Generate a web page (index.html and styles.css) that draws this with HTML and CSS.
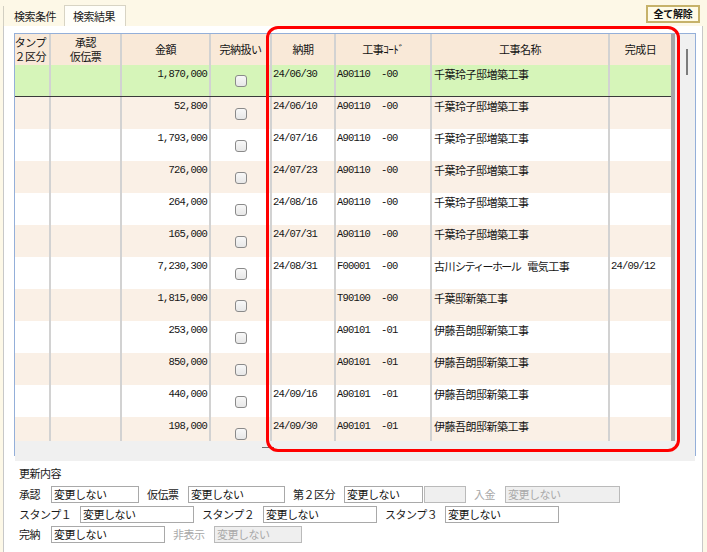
FILE: index.html
```html
<!DOCTYPE html>
<html lang="ja">
<head>
<meta charset="utf-8">
<title>検索結果</title>
<link rel="stylesheet" href="styles.css">
</head>
<body>
<div class="app">
  <div class="topbar">
    <div class="tabs">
      <div class="tab">検索条件</div>
      <div class="tab active">検索結果</div>
    </div>
    <button class="clear-btn">全て解除</button>
  </div>
  <div class="panel">
    <div class="gridbox">
      <div class="gmain">
        <div class="table">
          <div class="row head">
            <div class="c hc clip"><span>スタンプ</span><span>第２区分</span></div>
            <div class="c hc"><span>承認</span><span>仮伝票</span></div>
            <div class="c hc">金額</div>
            <div class="c hc">完納扱い</div>
            <div class="c hc">納期</div>
            <div class="c hc">工事ｺｰﾄﾞ</div>
            <div class="c hc">工事名称</div>
            <div class="c hc">完成日</div>
          </div>
          <div class="row sel">
            <div class="c"></div><div class="c"></div>
            <div class="c num">1,870,000</div>
            <div class="c chk"><span class="box"></span></div>
            <div class="c mono">24/06/30</div>
            <div class="c mono">A90110  -00</div>
            <div class="c">千葉玲子邸増築工事</div>
            <div class="c mono"></div>
          </div>
          <div class="row alt">
            <div class="c"></div><div class="c"></div>
            <div class="c num">52,800</div>
            <div class="c chk"><span class="box"></span></div>
            <div class="c mono">24/06/10</div>
            <div class="c mono">A90110  -00</div>
            <div class="c">千葉玲子邸増築工事</div>
            <div class="c mono"></div>
          </div>
          <div class="row">
            <div class="c"></div><div class="c"></div>
            <div class="c num">1,793,000</div>
            <div class="c chk"><span class="box"></span></div>
            <div class="c mono">24/07/16</div>
            <div class="c mono">A90110  -00</div>
            <div class="c">千葉玲子邸増築工事</div>
            <div class="c mono"></div>
          </div>
          <div class="row alt">
            <div class="c"></div><div class="c"></div>
            <div class="c num">726,000</div>
            <div class="c chk"><span class="box"></span></div>
            <div class="c mono">24/07/23</div>
            <div class="c mono">A90110  -00</div>
            <div class="c">千葉玲子邸増築工事</div>
            <div class="c mono"></div>
          </div>
          <div class="row">
            <div class="c"></div><div class="c"></div>
            <div class="c num">264,000</div>
            <div class="c chk"><span class="box"></span></div>
            <div class="c mono">24/08/16</div>
            <div class="c mono">A90110  -00</div>
            <div class="c">千葉玲子邸増築工事</div>
            <div class="c mono"></div>
          </div>
          <div class="row alt">
            <div class="c"></div><div class="c"></div>
            <div class="c num">165,000</div>
            <div class="c chk"><span class="box"></span></div>
            <div class="c mono">24/07/31</div>
            <div class="c mono">A90110  -00</div>
            <div class="c">千葉玲子邸増築工事</div>
            <div class="c mono"></div>
          </div>
          <div class="row">
            <div class="c"></div><div class="c"></div>
            <div class="c num">7,230,300</div>
            <div class="c chk"><span class="box"></span></div>
            <div class="c mono">24/08/31</div>
            <div class="c mono">F00001  -00</div>
            <div class="c">古川<span class="kana">シティーホール</span><span class="gap">　</span>電気工事</div>
            <div class="c mono">24/09/12</div>
          </div>
          <div class="row alt">
            <div class="c"></div><div class="c"></div>
            <div class="c num">1,815,000</div>
            <div class="c chk"><span class="box"></span></div>
            <div class="c mono"></div>
            <div class="c mono">T90100  -00</div>
            <div class="c">千葉邸新築工事</div>
            <div class="c mono"></div>
          </div>
          <div class="row">
            <div class="c"></div><div class="c"></div>
            <div class="c num">253,000</div>
            <div class="c chk"><span class="box"></span></div>
            <div class="c mono"></div>
            <div class="c mono">A90101  -01</div>
            <div class="c">伊藤吾朗邸新築工事</div>
            <div class="c mono"></div>
          </div>
          <div class="row alt">
            <div class="c"></div><div class="c"></div>
            <div class="c num">850,000</div>
            <div class="c chk"><span class="box"></span></div>
            <div class="c mono"></div>
            <div class="c mono">A90101  -01</div>
            <div class="c">伊藤吾朗邸新築工事</div>
            <div class="c mono"></div>
          </div>
          <div class="row">
            <div class="c"></div><div class="c"></div>
            <div class="c num">440,000</div>
            <div class="c chk"><span class="box"></span></div>
            <div class="c mono">24/09/16</div>
            <div class="c mono">A90101  -01</div>
            <div class="c">伊藤吾朗邸新築工事</div>
            <div class="c mono"></div>
          </div>
          <div class="row alt">
            <div class="c"></div><div class="c"></div>
            <div class="c num">198,000</div>
            <div class="c chk"><span class="box"></span></div>
            <div class="c mono">24/09/30</div>
            <div class="c mono">A90101  -01</div>
            <div class="c">伊藤吾朗邸新築工事</div>
            <div class="c mono"></div>
          </div>
        </div>
        <div class="dstrip"></div>
        <div class="vscroll"><div class="vthumb"></div></div>
      </div>
      <div class="hscroll"><div class="hthumb"></div></div>
    </div>

    <div class="form">
      <div class="form-title">更新内容</div>
      <div class="frow first">
        <span class="lbl w32">承認</span>
        <div class="field i87">変更しない</div>
        <span class="lbl w41 ml">仮伝票</span>
        <div class="field i97">変更しない</div>
        <span class="lbl w51 ml">第２区分</span>
        <div class="field i79">変更しない</div>
        <div class="field dis i42 ml1"></div>
        <span class="lbl dis w31 ml">入金</span>
        <div class="field dis i115">変更しない</div>
      </div>
      <div class="frow">
        <span class="lbl w61">スタンプ１</span>
        <div class="field i114">変更しない</div>
        <span class="lbl w61 ml">スタンプ２</span>
        <div class="field i114">変更しない</div>
        <span class="lbl w60 ml">スタンプ３</span>
        <div class="field i114">変更しない</div>
      </div>
      <div class="frow">
        <span class="lbl w32">完納</span>
        <div class="field i114">変更しない</div>
        <span class="lbl dis w41 ml">非表示</span>
        <div class="field dis i88">変更しない</div>
      </div>
    </div>
  </div>
  <div class="annot"></div>
</div>
</body>
</html>
```
FILE: styles.css
```css
* { box-sizing: border-box; }

body {
  margin: 0;
  width: 707px;
  height: 552px;
  overflow: hidden;
  background: #fff;
  font-family: "Noto Sans CJK JP", "Noto Sans", sans-serif;
  font-size: 11px;
  letter-spacing: -0.5px;
  color: #1a1a1a;
}

.app {
  position: relative;
  width: 707px;
  height: 552px;
  background: #fdf8e7;
}

/* top bar with tabs */
.topbar {
  height: 26px;
  display: flex;
  justify-content: space-between;
  align-items: flex-end;
  padding-left: 3px;
}
.tabs { display: flex; align-items: flex-end; }
.tab {
  height: 20px;
  width: 61px;
  line-height: 20px;
  padding-left: 10px;
  border-left: 1px solid #d2cfc2;
}
.tab.active {
  height: 21px;
  width: 62px;
  padding-left: 8px;
  background: #fffef9;
  border: 1px solid #d8d4c4;
  border-bottom: 0;
  line-height: 21px;
}
.clear-btn {
  align-self: flex-start;
  margin: 5px 7px 0 0;
  width: 54px;
  height: 18px;
  padding: 0;
  border: 2px solid #c6b26a;
  background: #fffbe7;
  font-family: "Noto Sans CJK JP", sans-serif;
  font-size: 10px;
  font-weight: 700;
  letter-spacing: -0.3px;
  line-height: 14px;
  color: #111;
}

/* white panel */
.panel {
  height: 526px;
  width: 700px;
  margin-left: 3px;
  background: #fff;
  border-left: 1px solid #c8c8c8;
  border-right: 1px solid #c8c8c8;
  padding: 7px 0 0 10px;
}

.gridbox {
  width: 682px;
  height: 423px;
  border: 1px solid #94afd9;
  background: #f0f0f0;
}
.gmain { display: flex; height: 407px; }
.table {
  width: 656px;
  height: 407px;
  overflow: hidden;
  background: #fff;
}
.dstrip { width: 4px; background: #a6a6a6; }
.vscroll { width: 20px; background: #f0f0f0; }
.vthumb {
  width: 2px;
  height: 26px;
  margin: 15px 0 0 11px;
  background: #7c7c7c;
}
.hscroll { height: 14px; background: #f0f0f0; }
.hthumb {
  width: 12px;
  height: 1px;
  margin: 6px 0 0 247px;
  background: #6e6e6e;
}

/* rows */
.row {
  display: grid;
  grid-template-columns: 36px 71px 89px 61px 64px 96px 178px 61px;
  height: 32px;
}
.row.head { height: 31px; background: #f9e9d8; }
.row.alt { background: #faf0e6; }
.row.sel { background: #d6f5b9; border-bottom: 1px solid #3a3a3a; }

.c {
  border-right: 2px solid #d2d2d2;
  padding: 2px 2px 0 2px;
  line-height: 14px;
  white-space: nowrap;
  overflow: hidden;
  color: #141414;
}
.c:last-child { border-right: 0; }

.hc {
  display: flex;
  flex-direction: column;
  justify-content: center;
  align-items: center;
  padding: 0 0 2px 0;
  line-height: 14px;
}
.hc span { white-space: nowrap; flex-shrink: 0; }
.hc.clip { align-items: flex-end; padding-right: 3px; }

.num {
  text-align: right;
  padding-right: 2px;
  font-family: "Liberation Mono", monospace;
  font-size: 10.5px;
  letter-spacing: -0.8px;
}
.mono {
  white-space: pre;
  padding-left: 1px;
  font-family: "Liberation Mono", monospace;
  font-size: 10.5px;
  letter-spacing: -0.8px;
}
.kana { letter-spacing: -1.6px; }
.gap { letter-spacing: -4px; }
.chk {
  display: flex;
  align-items: center;
  justify-content: center;
  padding: 1px 0 0 0;
}
.box {
  width: 12px;
  height: 12px;
  border: 1px solid #8a8a8a;
  border-radius: 3px;
  background: linear-gradient(#f8f8f8, #e7e7e7);
}

/* form */
.form { padding: 10px 0 0 5px; }
.form-title { height: 14px; line-height: 14px; }
.frow {
  display: flex;
  align-items: center;
  height: 17px;
  margin-top: 3px;
}
.frow.first { margin-top: 6px; }
.lbl { line-height: 17px; white-space: nowrap; color: #1a1a1a; }
.lbl.dis { color: #a8a8a8; }
.ml { margin-left: 8px; }
.ml1 { margin-left: 1px; }
.w31 { width: 31px; }
.w32 { width: 32px; }
.w41 { width: 41px; }
.w51 { width: 51px; }
.w60 { width: 60px; }
.w61 { width: 61px; }

.field {
  height: 17px;
  border: 1px solid #a9a9a9;
  background: #fff;
  line-height: 15px;
  padding-left: 2px;
  white-space: nowrap;
  overflow: hidden;
  color: #111;
}
.field.dis { background: #efefef; border-color: #bababa; color: #a9a9a9; }
.i42 { width: 42px; }
.i79 { width: 79px; }
.i87 { width: 88px; }
.i88 { width: 88px; }
.i97 { width: 97px; }
.i114 { width: 114px; }
.i115 { width: 115px; }

/* red annotation drawn over the grid */
.annot {
  position: absolute;
  left: 266px;
  top: 26px;
  width: 414px;
  height: 426px;
  border: 3px solid #ff0000;
  border-radius: 12px;
  pointer-events: none;
}
```
